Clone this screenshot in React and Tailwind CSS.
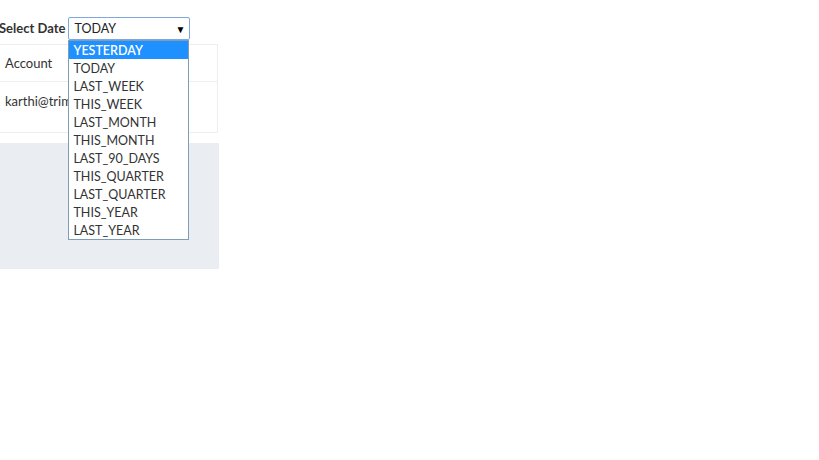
import React from "react";

const options = [
  "YESTERDAY",
  "TODAY",
  "LAST_WEEK",
  "THIS_WEEK",
  "LAST_MONTH",
  "THIS_MONTH",
  "LAST_90_DAYS",
  "THIS_QUARTER",
  "LAST_QUARTER",
  "THIS_YEAR",
  "LAST_YEAR",
];

const App = () => {
  return (
    <div className="w-[819px] h-[460px] bg-white text-[#333] font-['Lato','Open_Sans',sans-serif] text-[13px]">
      <div className="w-[219px]">
        {/* Select Date */}
        <div className="flex items-center pt-[17px] pb-[4px]">
          <span className="font-bold text-[13px] ml-[-1px] mr-[3px] mt-[1px] text-[#333]">Select Date</span>
          <div className="relative">
            <div className="w-[122px] h-[23px] border border-[#7fa6de] rounded-[2px] flex items-center justify-between pl-[5px] pr-[4px] pt-[1px] text-[12.5px] text-[#222]">
              <span>TODAY</span>
              <span className="text-[10px] text-black">▼</span>
            </div>
            {/* dropdown */}
            <div className="absolute left-0 top-[23px] w-[121px] bg-white border border-[#7f9db9] z-10 flex flex-col">
              {options.map((o, i) => (
                <div
                  key={o}
                  className={`h-[18px] leading-[18px] pl-[4px] pt-[1px] text-[12.5px] ${
                    i === 0 ? "bg-[#1e90ff] text-white font-semibold" : "text-[#333]"
                  }`}
                >
                  {o}
                </div>
              ))}
            </div>
          </div>
        </div>

        {/* Table */}
        <div className="w-[218px] border-t border-r border-b border-[#eeeeee]">
          <div className="h-[37px] flex items-center pt-[1px] pl-[5px] border-b border-[#eeeeee]">Account</div>
          <div className="h-[50px] pt-[10px] pl-[5px]">karthi@trim</div>
        </div>

        {/* gray panel */}
        <div className="mt-[10px] h-[126px] bg-[#eaedf1]"></div>
      </div>
    </div>
  );
};

export default App;
